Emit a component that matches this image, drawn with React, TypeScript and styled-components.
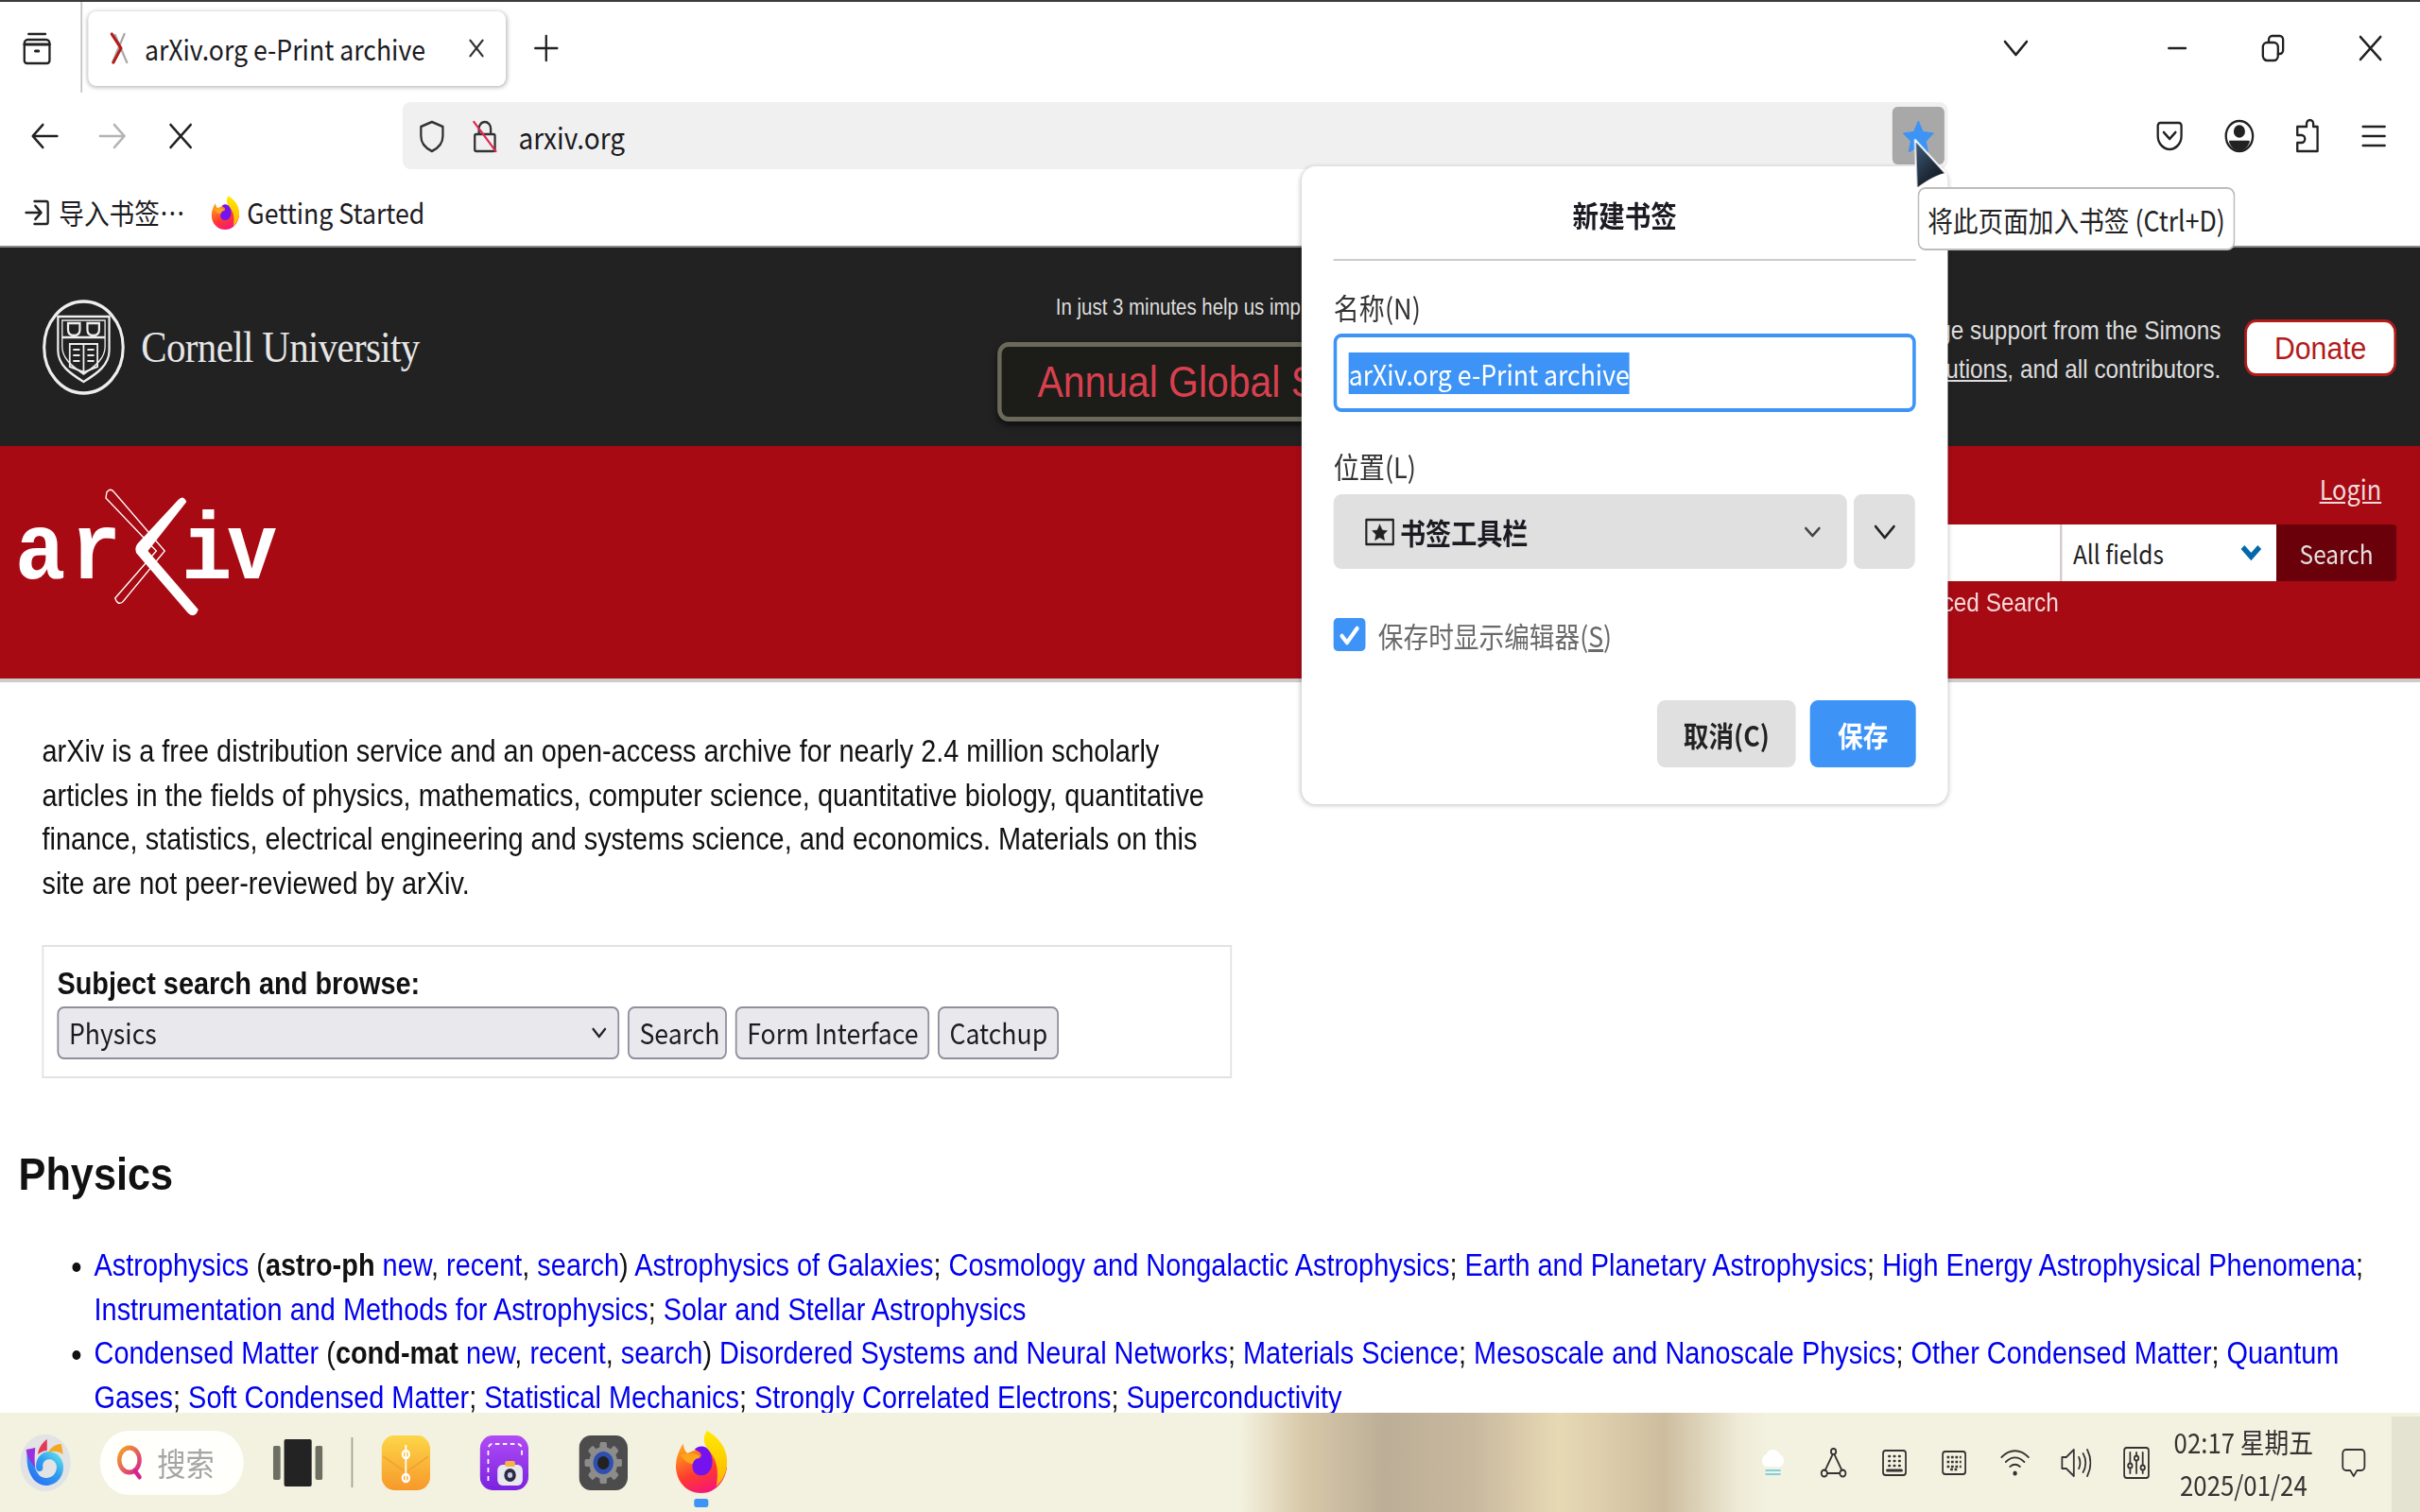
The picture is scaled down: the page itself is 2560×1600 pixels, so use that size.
import React from "react";
import styled, { createGlobalStyle } from "styled-components";

const UI_FONT = `"Noto Sans CJK SC", "Noto Sans", sans-serif`;
const WEB_FONT = `"Liberation Sans", Arial, sans-serif`;
const BLUE = "#3d94f6";

const GlobalStyle = createGlobalStyle`
  html, body {
    margin: 0;
    width: 2560px;
    height: 1600px;
    overflow: hidden;
    background: #fff;
  }
`;

/* the capture is squeezed horizontally, so the whole desktop is laid out wider and scaled back */
const Desktop = styled.div`
  position: relative;
  width: 2880px;
  height: 1600px;
  overflow: hidden;
  display: flex;
  flex-direction: column;
  transform: scaleX(0.8889);
  transform-origin: 0 0;
  font-family: ${UI_FONT};
  color: #1c1b22;
`;

const Ico = styled.svg.attrs<{ $w?: number; $h?: number; stroke?: string; strokeWidth?: string | number }>(p => ({
  fill: "none",
  stroke: p.stroke || "#222",
  strokeWidth: p.strokeWidth || 2.6,
  strokeLinecap: "round",
  strokeLinejoin: "round",
}))<{ $w?: number; $h?: number }>`
  width: ${p => p.$w || 32}px;
  height: ${p => p.$h || 32}px;
  flex-shrink: 0;
  display: block;
`;

const Slot = styled.div<{ $w?: number; $ml?: number }>`
  width: ${p => p.$w || 40}px;
  margin-left: ${p => p.$ml || 0}px;
  flex-shrink: 0;
  display: flex;
  align-items: center;
  justify-content: center;
`;

const TabRow = styled.div`
  height: 98px;
  border-top: 2px solid #3c3c3c;
  display: flex;
  align-items: center;
  padding: 0 39px 0 20px;
  background: #fff;
`;

const TabDivider = styled.div`
  width: 2px;
  height: 96px;
  margin-left: 28px;
  align-self: flex-start;
  background: #c4c4c4;
`;

const Tab = styled.div`
  width: 497px;
  height: 79px;
  margin-left: 7px;
  padding: 0 24px;
  box-sizing: border-box;
  display: flex;
  align-items: center;
  background: #fff;
  border-radius: 9px;
  box-shadow: 0 1px 6px rgba(0, 0, 0, 0.35);
`;

const TabTitle = styled.span`
  margin-left: 19px;
  font-size: 30px;
  white-space: nowrap;
  flex: 1;
`;

const WindowControls = styled.div`
  margin-left: auto;
  display: flex;
  align-items: center;
`;

const NavRow = styled.div`
  height: 82px;
  padding: 8px 0 0 33px;
  display: flex;
  align-items: flex-start;
  background: #fff;
`;

const NavButton = styled(Slot)`
  height: 71px;
`;

const UrlBar = styled.div`
  width: 1839px;
  height: 71px;
  margin-left: 244px;
  padding-left: 17px;
  box-sizing: border-box;
  display: flex;
  align-items: center;
  background: #f0f0f0;
  border-radius: 9px;
`;

const UrlText = styled.span`
  margin-left: 22px;
  font-size: 31.5px;
`;

const StarButton = styled.div`
  width: 62px;
  height: 61px;
  margin-left: auto;
  margin-right: 4px;
  display: flex;
  align-items: center;
  justify-content: center;
  background: #a8a8a8;
  border-radius: 6px;
`;

const BookmarksRow = styled.div`
  height: 70px;
  padding-left: 29px;
  display: flex;
  align-items: center;
  background: #fff;
  border-bottom: 2px solid #8a8a8a;
`;

const BookmarkLabel = styled.span<{ $ml: number }>`
  margin-left: ${p => p.$ml}px;
  margin-top: -2px;
  font-size: 30px;
  white-space: nowrap;
`;

const BookmarkGap = styled.span`
  width: 31px;
`;

const TopBanner = styled.div`
  height: 210px;
  padding-right: 28px;
  display: flex;
  align-items: flex-start;
  background: #222;
  font-family: ${WEB_FONT};
`;

const CornellBrand = styled.div`
  margin: 55px 0 0 49px;
  display: flex;
  align-items: center;
`;

const CornellName = styled.span`
  margin-left: 18px;
  font-family: "Liberation Serif", serif;
  font-size: 46px;
  letter-spacing: -0.7px;
  color: #e6e6e6;
  white-space: nowrap;
`;

const SurveyBlock = styled.div`
  width: 540px;
  margin: 43px 0 0 688px;
  display: flex;
  flex-direction: column;
  align-items: center;
`;

const SurveyNote = styled.div`
  height: 57px;
  font-size: 23px;
  line-height: 40px;
  color: #ddd;
  white-space: nowrap;
`;

const SurveyButton = styled.div`
  width: 100%;
  height: 84px;
  box-sizing: border-box;
  display: flex;
  align-items: center;
  justify-content: center;
  border: 5px solid #6b6a5a;
  border-radius: 13px;
  background: #1c1c18;
  box-shadow: 0 4px 8px rgba(0, 0, 0, 0.6);
  font-size: 46px;
  color: #d8404f;
  white-space: nowrap;
`;

const ThanksBlock = styled.div`
  margin: 67px 0 0 auto;
  font-size: 27.4px;
  line-height: 41px;
  color: #ddd;
  text-align: right;
  white-space: nowrap;
`;

const ThanksLink = styled.span`
  text-decoration: underline;
`;

const DonateButton = styled.div`
  width: 181px;
  height: 60px;
  margin: 76px 0 0 28px;
  box-sizing: border-box;
  display: flex;
  align-items: center;
  justify-content: center;
  background: #fff;
  border: 3px solid #b31b1b;
  border-radius: 14px;
  font-size: 34px;
  color: #b31b1b;
`;

const RedBanner = styled.div`
  height: 246px;
  padding-right: 28px;
  display: flex;
  justify-content: space-between;
  background: #a80a14;
  border-bottom: 4px solid #ccc;
`;

const ArxivMark = styled.svg`
  width: 335px;
  height: 140px;
  margin-top: 45px;
`;

const SearchColumn = styled.div`
  display: flex;
  flex-direction: column;
  align-items: flex-end;
`;

const LoginLink = styled.a`
  height: 56px;
  margin: 25px 18px 2px 0;
  font-size: 28.5px;
  line-height: 40px;
  color: #f0dcdc;
  text-decoration: underline;
`;

const SearchRow = styled.div`
  display: flex;
  height: 60px;
`;

const SearchInput = styled.div`
  width: 452px;
  background: #fff;
`;

const FieldSelect = styled.div`
  width: 257px;
  padding: 0 17px 0 13px;
  box-sizing: border-box;
  display: flex;
  align-items: center;
  justify-content: space-between;
  background: #fff;
  border-left: 2px solid #ccc;
  font-size: 27.5px;
  color: #222;
`;

const SearchSubmit = styled.div`
  width: 143px;
  display: flex;
  align-items: center;
  justify-content: center;
  background: #6a0009;
  border-radius: 0 4px 4px 0;
  font-size: 27.5px;
  color: #e4dede;
`;

const AdvancedLink = styled.a`
  margin: 5px 402px 0 0;
  font-family: ${WEB_FONT};
  font-size: 27.4px;
  line-height: 36px;
  color: #f4dada;
`;

const Content = styled.main`
  flex: 1;
  min-height: 0;
  background: #fff;
  font-family: ${WEB_FONT};
  font-size: 32.5px;
  line-height: 46.7px;
  color: #111;
`;

const Intro = styled.p`
  width: 1416px;
  margin: 50px 0 0 50px;
`;

const BrowseBox = styled.div`
  width: 1416px;
  height: 141px;
  margin: 41px 0 0 50px;
  padding: 16px 16px 0;
  box-sizing: border-box;
  border: 2px solid #e2e2e2;
`;

const BrowseTitle = styled.div`
  font-weight: bold;
  height: 47px;
`;

const BrowseRow = styled.div`
  display: flex;
  gap: 10px;
`;

const FormControl = styled.div<{ $w: number }>`
  width: ${p => p.$w}px;
  height: 56px;
  box-sizing: border-box;
  display: flex;
  align-items: center;
  justify-content: space-between;
  padding: 0 12px;
  background: #e9e9ed;
  border: 2px solid #8f8f9d;
  border-radius: 8px;
  font-family: ${UI_FONT};
  font-size: 30px;
  color: #1c1b22;
  white-space: nowrap;
`;

const SectionHeading = styled.h2`
  margin: 71px 0 0 22px;
  font-size: 48.7px;
  line-height: 60px;
  font-weight: bold;
`;

const TopicList = styled.ul`
  width: 2718px;
  margin: 44px 0 0 112px;
  padding: 0;
`;

const TopicLink = styled.a`
  color: #0000ee;
`;

const Taskbar = styled.footer`
  position: relative;
  height: 105px;
  flex-shrink: 0;
  display: flex;
  align-items: center;
  background: linear-gradient(
    90deg,
    #f3f1df 0,
    #f3f1df 1476px,
    #d8c9a9 1550px,
    #bcae97 1648px,
    #c8b89e 1752px,
    #e8d9b5 1855px,
    #cdbd9f 1981px,
    #eeead6 2068px,
    #f3f1df 2104px
  );
`;

const StartLogo = styled.svg`
  width: 62px;
  height: 62px;
  margin-left: 23px;
  flex-shrink: 0;
`;

const SearchPill = styled.div`
  width: 171px;
  height: 68px;
  margin-left: 34px;
  padding-left: 20px;
  box-sizing: border-box;
  display: flex;
  align-items: center;
  gap: 16px;
  background: #fffffb;
  border-radius: 34px;
  font-size: 34px;
  color: #a5a5a5;
`;

const TaskDivider = styled.div`
  width: 2px;
  height: 53px;
  margin-left: 34px;
  background: #a5a596;
`;

const AppIcon = styled.svg<{ $w?: number; $h?: number; $ml: number }>`
  width: ${p => p.$w || 58}px;
  height: ${p => p.$h || 58}px;
  margin-left: ${p => p.$ml}px;
  flex-shrink: 0;
`;

const RunningApp = styled.div`
  position: relative;
  margin-left: 55px;
  display: flex;
`;

const RunningDot = styled.span`
  position: absolute;
  left: 24px;
  bottom: -14px;
  width: 17px;
  height: 9px;
  border-radius: 3px;
  background: ${BLUE};
`;

const Tray = styled.div`
  margin-left: auto;
  align-self: stretch;
  display: flex;
  align-items: center;
`;

const Clock = styled.div`
  width: 166px;
  margin-left: 28px;
  text-align: center;
  font-size: 29px;
  line-height: 45px;
  color: #333;
  white-space: nowrap;
`;

const ShowDesktop = styled.div`
  width: 34px;
  height: 101px;
  margin-left: 30px;
  align-self: flex-end;
  background: #e4e2d0;
`;

const BookmarkPanel = styled.section`
  position: absolute;
  left: 1549px;
  top: 176px;
  width: 769px;
  height: 675px;
  padding: 0 38px;
  box-sizing: border-box;
  background: #fff;
  border-radius: 16px;
  box-shadow: 0 1px 6px rgba(0, 0, 0, 0.25);
`;

const PanelTitle = styled.h3`
  height: 100px;
  margin: 0;
  box-sizing: border-box;
  padding-top: 26px;
  border-bottom: 2px solid #ccc;
  text-align: center;
  font-size: 31px;
  line-height: 50px;
  font-weight: bold;
`;

const FieldLabel = styled.div<{ $mt: number }>`
  margin-top: ${p => p.$mt}px;
  height: 52px;
  font-size: 30.5px;
  line-height: 50px;
  color: #333;
`;

const NameInput = styled.div`
  height: 83px;
  margin-top: 1px;
  padding-left: 14px;
  box-sizing: border-box;
  display: flex;
  align-items: center;
  border: 4px solid ${BLUE};
  border-radius: 9px;
  font-size: 30px;
`;

const SelectedText = styled.span`
  height: 44px;
  line-height: 44px;
  background: ${BLUE};
  color: #fff;
  white-space: nowrap;
`;

const FolderRow = styled.div`
  display: flex;
  gap: 8px;
  margin-top: 3px;
`;

const FolderSelect = styled.div`
  width: 611px;
  height: 79px;
  padding: 0 30px 0 37px;
  box-sizing: border-box;
  display: flex;
  align-items: center;
  background: #e0e0e0;
  border-radius: 9px;
  font-size: 30.5px;
  font-weight: bold;
`;

const FolderName = styled.span`
  margin-left: 6px;
  flex: 1;
`;

const FolderExpand = styled.div`
  width: 73px;
  height: 79px;
  display: flex;
  align-items: center;
  justify-content: center;
  background: #e0e0e0;
  border-radius: 9px;
`;

const CheckRow = styled.div`
  height: 35px;
  margin-top: 52px;
  display: flex;
  align-items: center;
  font-size: 30px;
  color: #6a6a6a;
  white-space: nowrap;
`;

const CheckMark = styled.span`
  width: 38px;
  height: 35px;
  margin-right: 15px;
  display: flex;
  align-items: center;
  justify-content: center;
  background: ${BLUE};
  border-radius: 5px;
`;

const PanelActions = styled.div`
  margin-top: 52px;
  display: flex;
  justify-content: flex-end;
  gap: 17px;
`;

const PanelButton = styled.div<{ $primary?: boolean; $w: number }>`
  width: ${p => p.$w}px;
  height: 71px;
  display: flex;
  align-items: center;
  justify-content: center;
  border-radius: 9px;
  background: ${p => (p.$primary ? BLUE : "#e0e0e0")};
  color: ${p => (p.$primary ? "#fff" : "#222")};
  font-size: 30px;
  font-weight: bold;
`;

const Tooltip = styled.div`
  position: absolute;
  left: 2282px;
  top: 198px;
  width: 378px;
  height: 67px;
  box-sizing: border-box;
  display: flex;
  align-items: center;
  justify-content: center;
  background: #fff;
  border: 2px solid #bdbdbd;
  border-radius: 9px;
  font-size: 30px;
  color: #222;
  white-space: nowrap;
`;

const CursorArrow = styled.svg`
  position: absolute;
  left: 2272px;
  top: 144px;
  width: 48px;
  height: 60px;
`;

const FirefoxLogo = ({ w, h }: { w: number; h: number }) => (
  <svg viewBox="0 0 64 68" width={w} height={h} style={{ display: "block", flexShrink: 0 }}>
    <defs>
      <linearGradient id="ffBody" x1="0.2" y1="0.1" x2="0.6" y2="1">
        <stop offset="0" stopColor="#ff9a1c" />
        <stop offset="0.55" stopColor="#ff3a30" />
        <stop offset="1" stopColor="#f5157a" />
      </linearGradient>
      <linearGradient id="ffFlame" x1="0.5" y1="0" x2="0.5" y2="1">
        <stop offset="0" stopColor="#ffea00" />
        <stop offset="1" stopColor="#ffb300" />
      </linearGradient>
    </defs>
    <path d="M10 14C3 24 0 34 2 44C5 59 18 67 32 67C48 67 60 56 63 40C55 26 44 20 32 20C22 20 18 24 15 24C12 22 11 18 10 14Z" fill="url(#ffBody)" />
    <path d="M39 0C33 8 35 15 42 22C50 30 54 42 50 60C60 52 64 42 63 30C62 18 52 6 39 0Z" fill="url(#ffFlame)" />
    <path d="M7 26C14 24 22 23 30 27L26 35C18 37 11 33 7 26Z" fill="#ffa51c" />
    <path d="M24 20C30 15 38 16 42 22C46 28 47 36 43 42C39 48 31 50 25 46C20 42 20 34 26 30C32 30 34 26 30 23z" fill="#7412f0" />
  </svg>
);

const GearIcon = () => {
  const teeth = [0, 45, 90, 135, 180, 225, 270, 315];
  return (
    <AppIcon viewBox="0 0 58 58" $ml={60}>
      <rect width="58" height="58" rx="14" fill="#4c4c4c" />
      <g fill="#8c8c8c">
        {teeth.map(a => (
          <rect key={a} x="25" y="7" width="8" height="44" rx="2" transform={`rotate(${a} 29 29)`} />
        ))}
      </g>
      <circle cx="29" cy="29" r="17" fill="#8c8c8c" />
      <circle cx="29" cy="29" r="12" fill="#2f4fb0" />
      <circle cx="29" cy="29" r="7" fill="#222" />
    </AppIcon>
  );
};

const topics = [
  {
    name: "Astrophysics",
    tag: "astro-ph",
    subs: [
      "Astrophysics of Galaxies",
      "Cosmology and Nongalactic Astrophysics",
      "Earth and Planetary Astrophysics",
      "High Energy Astrophysical Phenomena",
      "Instrumentation and Methods for Astrophysics",
      "Solar and Stellar Astrophysics",
    ],
  },
  {
    name: "Condensed Matter",
    tag: "cond-mat",
    subs: [
      "Disordered Systems and Neural Networks",
      "Materials Science",
      "Mesoscale and Nanoscale Physics",
      "Other Condensed Matter",
      "Quantum", // wraps right here in the capture, kept as two runs with "Gases"
      "Gases",
      "Soft Condensed Matter",
      "Statistical Mechanics",
      "Strongly Correlated Electrons",
      "Superconductivity",
    ],
  },
];

export default function App() {
  return (
    <Desktop>
      <GlobalStyle />

      <TabRow>
        <Slot $w={48}>
          <Ico viewBox="0 0 36 36" $w={36} $h={36}>
            <path d="M8 3h20M3 13a4 4 0 0 1 4-4h22a4 4 0 0 1 4 4v18a3 3 0 0 1-3 3H6a3 3 0 0 1-3-3z" />
            <path d="M3 14h30M16 21h4" strokeWidth="3" />
          </Ico>
        </Slot>
        <TabDivider />
        <Tab>
          <Ico viewBox="0 0 24 36" $w={24} $h={36}>
            <path d="M19 3L5 33M8 4l14 29" stroke="#a9a9a9" />
            <path d="M4 3l11 15L6 33" stroke="#b31b1b" strokeWidth="3.4" />
          </Ico>
          <TabTitle>arXiv.org e-Print archive</TabTitle>
          <Ico viewBox="0 0 24 24" $w={22} $h={22} stroke="#333">
            <path d="M4 3l16 18M20 3L4 21" />
          </Ico>
        </Tab>
        <Slot $ml={28}>
          <Ico viewBox="0 0 32 32">
            <path d="M16 3v26M3 16h26" />
          </Ico>
        </Slot>
        <WindowControls>
          <Slot>
            <Ico viewBox="0 0 32 20" $h={20}>
              <path d="M3 3l13 14L29 3" />
            </Ico>
          </Slot>
          <Slot $ml={152}>
            <Ico viewBox="0 0 24 8" $w={24} $h={8}>
              <path d="M2 4h20" />
            </Ico>
          </Slot>
          <Slot $ml={74}>
            <Ico viewBox="0 0 28 30" $w={28} $h={30}>
              <rect x="2" y="9" width="18" height="19" rx="5" />
              <path d="M9 8V6a4 4 0 0 1 4-4h9a4 4 0 0 1 4 4v11a4 4 0 0 1-4 4h-2" />
            </Ico>
          </Slot>
          <Slot $ml={76}>
            <Ico viewBox="0 0 28 28" $w={28} $h={28}>
              <path d="M2 2l24 24M26 2L2 26" />
            </Ico>
          </Slot>
        </WindowControls>
      </TabRow>

      <NavRow>
        <NavButton>
          <Ico viewBox="0 0 34 30" $w={34} $h={30}>
            <path d="M32 15H3M15 3L3 15l12 12" />
          </Ico>
        </NavButton>
        <NavButton $ml={41}>
          <Ico viewBox="0 0 34 30" $w={34} $h={30} stroke="#b4b4b4">
            <path d="M2 15h29M19 3l12 12-12 12" />
          </Ico>
        </NavButton>
        <NavButton $ml={41}>
          <Ico viewBox="0 0 30 30" $w={30} $h={30}>
            <path d="M3 3l24 24M27 3L3 27" />
          </Ico>
        </NavButton>
        <UrlBar>
          <Slot $w={36}>
            <Ico viewBox="0 0 32 36" $w={32} $h={36} stroke="#333">
              <path d="M16 3l13 5v10c0 8-6 13-13 16C9 31 3 26 3 18V8z" />
            </Ico>
          </Slot>
          <Slot $w={36} $ml={27}>
            <Ico viewBox="0 0 32 38" $w={32} $h={38} stroke="#333">
              <path d="M6 17h20a2 2 0 0 1 2 2v14a2 2 0 0 1-2 2H6a2 2 0 0 1-2-2V19a2 2 0 0 1 2-2zM9 17v-6a7 7 0 0 1 14 0v6" />
              <path d="M3 4l26 31" stroke="#e22850" strokeWidth="2.4" />
            </Ico>
          </Slot>
          <UrlText>arxiv.org</UrlText>
          <StarButton>
            <svg viewBox="0 0 38 34" width="38" height="34">
              <path d="M19 1l5.400 11.400L37 14l-9 8.600L30.400 34 19 28 7.600 34 10 22.600 1 14l12.600-1.600z" fill={BLUE} stroke={BLUE} strokeLinejoin="round" />
            </svg>
          </StarButton>
        </UrlBar>
        <NavButton $ml={244}>
          <Ico viewBox="0 0 34 34" $w={34} $h={34}>
            <path d="M6 3h22a3 3 0 0 1 3 3v11c0 8-7 14-14 14S3 25 3 17V6a3 3 0 0 1 3-3z" />
            <path d="M10 13l7 7 7-7" />
          </Ico>
        </NavButton>
        <NavButton $ml={43}>
          <Ico viewBox="0 0 36 36" $w={36} $h={36}>
            <circle cx="18" cy="18" r="16" />
            <circle cx="18" cy="13" r="5.500" fill="#222" />
            <path d="M7 24h22c-2 5-6 8-11 8s-9-3-11-8z" fill="#222" />
          </Ico>
        </NavButton>
        <NavButton $ml={41}>
          <Ico viewBox="0 0 32 38" $w={32} $h={38}>
            <path d="M12 9h4V6a4 4 0 0 1 8 0v3h5v26H5v-9h5a4 4 0 0 0 0-8H5V9z" transform="translate(-1 0)" />
          </Ico>
        </NavButton>
        <NavButton $ml={39}>
          <Ico viewBox="0 0 32 28" $w={32} $h={28}>
            <path d="M3 4h26M3 14h26M3 24h26" />
          </Ico>
        </NavButton>
      </NavRow>

      <BookmarksRow>
        <Ico viewBox="0 0 30 34" $w={30} $h={34}>
          <path d="M12 5h14a2 2 0 0 1 2 2v20a2 2 0 0 1-2 2H12" />
          <path d="M2 17h17M13 10l7 7-7 7" />
        </Ico>
        <BookmarkLabel $ml={11}>导入书签…</BookmarkLabel>
        <BookmarkGap />
        <FirefoxLogo w={34} h={37} />
        <BookmarkLabel $ml={9}>Getting Started</BookmarkLabel>
      </BookmarksRow>

      <TopBanner>
        <CornellBrand>
          <svg viewBox="0 0 99 101" width="101" height="101" fill="none" stroke="#eee" strokeWidth="2.500">
            <ellipse cx="49.500" cy="50.500" rx="47" ry="48.500" strokeWidth="3.500" />
            <path d="M19 18h61v36c0 15-14 24-30.500 33C33 78 19 69 19 54z" />
            <path d="M24 22h51v28c0 12-11 20-25.500 29C35 70 24 62 24 50z" strokeWidth="1.500" />
            <path d="M24 40h51" />
            <path d="M31 25h14v7c0 4-3 6-7 6s-7-2-7-6zM54 25h14v7c0 4-3 6-7 6s-7-2-7-6z" />
            <path d="M33 47h33v24l-16 6-17-6zM49.500 46v32M37 53h8M37 59h8M37 65h8M54 53h8M54 59h8M54 65h8" strokeWidth="2" />
          </svg>
          <CornellName>Cornell University</CornellName>
        </CornellBrand>
        <SurveyBlock>
          <SurveyNote>In just 3 minutes help us improve arXiv:</SurveyNote>
          <SurveyButton>Annual Global Survey</SurveyButton>
        </SurveyBlock>
        <ThanksBlock>
          We gratefully acknowledge support from the Simons
          <br />
          Foundation, member <ThanksLink>institutions</ThanksLink>, and all contributors.
        </ThanksBlock>
        <DonateButton>Donate</DonateButton>
      </TopBanner>

      <RedBanner>
        <ArxivMark viewBox="0 0 335 140">
          <g fill="#fff" fontFamily="Liberation Mono, monospace" fontWeight="bold" fontSize="100">
            <text x="18" y="95" letterSpacing="6">ar</text>
            <text x="216" y="95" letterSpacing="-6">iv</text>
          </g>
          <path d="M127 4Q131-1 135 3L196 66 146 120Q140 124 137 116L186 66 126 10Z" fill="#a80a14" stroke="#fff" strokeWidth="1.500" />
          <path d="M212 12Q218 6 222 14L176 66 236 128Q232 138 224 132L162 68Q160 62 164 58Z" fill="#fff" />
        </ArxivMark>
        <SearchColumn>
          <LoginLink>Login</LoginLink>
          <SearchRow>
            <SearchInput />
            <FieldSelect>
              All fields
              <svg viewBox="0 0 26 18" width="26" height="18" fill="none" stroke="#0068ac" strokeWidth="6">
                <path d="M3 3l10 10L23 3" />
              </svg>
            </FieldSelect>
            <SearchSubmit>Search</SearchSubmit>
          </SearchRow>
          <AdvancedLink>Advanced Search</AdvancedLink>
        </SearchColumn>
      </RedBanner>

      <Content>
        <Intro>
          arXiv is a free distribution service and an open-access archive for nearly 2.4 million scholarly
          articles in the fields of physics, mathematics, computer science, quantitative biology, quantitative
          finance, statistics, electrical engineering and systems science, and economics. Materials on this
          site are not peer-reviewed by arXiv.
        </Intro>
        <BrowseBox>
          <BrowseTitle>Subject search and browse:</BrowseTitle>
          <BrowseRow>
            <FormControl $w={669}>
              Physics
              <Ico viewBox="0 0 20 12" $w={20} $h={12}>
                <path d="M3 2l7 8 7-8" />
              </Ico>
            </FormControl>
            <FormControl $w={118}>Search</FormControl>
            <FormControl $w={231}>Form Interface</FormControl>
            <FormControl $w={144}>Catchup</FormControl>
          </BrowseRow>
        </BrowseBox>
        <SectionHeading>Physics</SectionHeading>
        <TopicList>
          {topics.map(t => (
            <li key={t.tag}>
              <TopicLink>{t.name}</TopicLink> (<b>{t.tag}</b> <TopicLink>new</TopicLink>,{" "}
              <TopicLink>recent</TopicLink>, <TopicLink>search</TopicLink>){" "}
              {t.subs.map((s, i) => (
                <React.Fragment key={s}>
                  <TopicLink>{s}</TopicLink>
                  {i === t.subs.length - 1 ? "" : s === "Quantum" ? " " : "; "}
                </React.Fragment>
              ))}
            </li>
          ))}
        </TopicList>
      </Content>

      <Taskbar>
        <StartLogo viewBox="0 0 62 62">
          <defs>
            <linearGradient id="startRing" x1="0" y1="1" x2="1" y2="0">
              <stop offset="0" stopColor="#2a6cf5" />
              <stop offset="0.6" stopColor="#2f9df0" />
              <stop offset="1" stopColor="#5fe0ea" />
            </linearGradient>
          </defs>
          <circle cx="31" cy="31" r="30" fill="#e2e3e4" />
          <path d="M13 22C13 30 13 38 20 46C28 54 42 52 47 42C51 33 46 24 36 23C28 23 23 29 24 36" fill="none" stroke="url(#startRing)" strokeWidth="8" strokeLinecap="round" />
          <path d="M8 17L19 15C18 24 18 30 19 36C13 30 9 24 8 17Z" fill="#9a2fe0" />
          <path d="M22 22C23 15 27 10 33 6L33 18C29 18 25 20 22 22Z" fill="#e43a5a" />
          <path d="M34 20C38 14 44 11 50 11L52 22C46 18 40 18 34 20Z" fill="#f6a623" />
        </StartLogo>
        <SearchPill>
          <svg viewBox="0 0 32 38" width="32" height="38" fill="none" strokeWidth="5" strokeLinecap="round">
            <defs>
              <linearGradient id="searchRing" x1="0" y1="0" x2="1" y2="1">
                <stop offset="0" stopColor="#f5a623" />
                <stop offset="1" stopColor="#d6248f" />
              </linearGradient>
            </defs>
            <ellipse cx="15" cy="16" rx="12" ry="13" stroke="url(#searchRing)" />
            <path d="M22 28l5 6" stroke="#d6248f" />
          </svg>
          搜索
        </SearchPill>
        <AppIcon viewBox="0 0 54 50" $w={59} $h={50} $ml={35} preserveAspectRatio="none">
          <rect x="0" y="7" width="8" height="36" rx="2" fill="#6d6f62" />
          <rect x="12" y="0" width="30" height="50" rx="2" fill="#232323" />
          <rect x="46" y="7" width="8" height="36" rx="2" fill="#6d6f62" />
        </AppIcon>
        <TaskDivider />
        <AppIcon viewBox="0 0 58 58" $ml={34}>
          <defs>
            <linearGradient id="mailBg" x1="0" y1="0" x2="0" y2="1">
              <stop offset="0" stopColor="#fdd648" />
              <stop offset="1" stopColor="#f7982a" />
            </linearGradient>
          </defs>
          <rect width="58" height="58" rx="15" fill="url(#mailBg)" />
          <path d="M2 22l27 17 27-17" fill="none" stroke="#f2a52f" strokeWidth="2" />
          <path d="M29 10v38" stroke="#fff" strokeWidth="2" />
          <circle cx="29" cy="20" r="4" fill="none" stroke="#fff" strokeWidth="2.500" />
          <circle cx="29" cy="45" r="4" fill="none" stroke="#fff" strokeWidth="2.500" />
        </AppIcon>
        <AppIcon viewBox="0 0 58 58" $ml={59}>
          <defs>
            <linearGradient id="camBg" x1="0" y1="0" x2="0" y2="1">
              <stop offset="0" stopColor="#b14cf5" />
              <stop offset="1" stopColor="#7a22e0" />
            </linearGradient>
          </defs>
          <rect width="58" height="58" rx="15" fill="url(#camBg)" />
          <path d="M10 48V14a5 5 0 0 1 5-5h30a5 5 0 0 1 5 5v10" fill="none" stroke="#fff" strokeWidth="2" strokeDasharray="5 4" />
          <rect x="21" y="31" width="30" height="22" rx="6" fill="#e8e8ee" />
          <rect x="30" y="27" width="12" height="6" rx="2" fill="#f5b342" />
          <circle cx="36" cy="42" r="7" fill="#2b2b44" />
          <circle cx="36" cy="42" r="3" fill="#c9c9e6" />
        </AppIcon>
        <GearIcon />
        <RunningApp>
          <FirefoxLogo w={65} h={67} />
          <RunningDot />
        </RunningApp>

        <Tray>
          <svg viewBox="0 0 34 30" width="34" height="30">
            <path d="M8 19a7 7 0 0 1 1-13 9 9 0 0 1 16 0 7 7 0 0 1 1 13z" fill="#fff" />
            <path d="M8 22h18v2H8zM8 26h18v2H8z" fill="#7fd0e0" />
          </svg>
          <Slot $w={32} $ml={39}>
            <Ico viewBox="0 0 32 34" $h={34} stroke="#333" strokeWidth="2">
              <circle cx="16" cy="5" r="3" />
              <circle cx="5" cy="28" r="3.500" />
              <circle cx="27" cy="28" r="3.500" />
              <path d="M15 8L6 25M17 8l9 17M9 28h14" />
            </Ico>
          </Slot>
          <Slot $w={31} $ml={41}>
            <Ico viewBox="0 0 31 30" $w={31} $h={30} stroke="#333" strokeWidth="2">
              <rect x="2" y="2" width="27" height="26" rx="3" />
              <path d="M9 8h1M15 8h1M21 8h1M9 13h1M15 13h1M21 13h1M9 18h1M15 18h1M21 18h1" strokeWidth="2.500" />
              <path d="M7 23h17" strokeWidth="3" />
            </Ico>
          </Slot>
          <Slot $w={31} $ml={40}>
            <Ico viewBox="0 0 31 28" $w={31} $h={28} stroke="#333" strokeWidth="2">
              <rect x="2" y="2" width="27" height="24" rx="3" />
              <path d="M7 8h17M7 13h17M7 18h17M11 21h9" strokeDasharray="3 2" strokeWidth="2.500" strokeLinecap="butt" />
            </Ico>
          </Slot>
          <Slot $w={36} $ml={39}>
            <Ico viewBox="0 0 36 30" $w={36} $h={30} stroke="#333" strokeWidth="2">
              <path d="M2 9c10-9 22-9 32 0M7 14c7-6 15-6 22 0M12 19c4-3 8-3 12 0" />
              <circle cx="18" cy="26" r="1.500" fill="#333" />
            </Ico>
          </Slot>
          <Slot $w={37} $ml={36}>
            <Ico viewBox="0 0 37 34" $w={37} $h={34} stroke="#333" strokeWidth="2">
              <path d="M2 11h5l9-8v28l-9-8H2z" />
              <path d="M22 11c2 4 2 8 0 12M27 7c4 6 4 14 0 20M32 3c5 9 5 19 0 28" />
            </Ico>
          </Slot>
          <Slot $w={33} $ml={37}>
            <Ico viewBox="0 0 33 36" $w={33} $h={36} stroke="#333" strokeWidth="2">
              <rect x="2" y="2" width="29" height="32" rx="3" />
              <path d="M9 7v22M16.500 7v22M24 7v22" />
              <circle cx="9" cy="21" r="2.500" fill="#f3f2df" />
              <circle cx="16.500" cy="13" r="2.500" fill="#f3f2df" />
              <circle cx="24" cy="23" r="2.500" fill="#f3f2df" />
            </Ico>
          </Slot>
          <Clock>
            02:17 星期五
            <br />
            2025/01/24
          </Clock>
          <Slot $w={30} $ml={33}>
            <Ico viewBox="0 0 30 32" $w={30} $h={32} stroke="#333" strokeWidth="2">
              <path d="M6 2h18a4 4 0 0 1 4 4v14a4 4 0 0 1-4 4h-5l-4 6-4-6H6a4 4 0 0 1-4-4V6a4 4 0 0 1 4-4z" />
            </Ico>
          </Slot>
          <ShowDesktop />
        </Tray>
      </Taskbar>

      <BookmarkPanel>
        <PanelTitle>新建书签</PanelTitle>
        <FieldLabel $mt={24}>名称(N)</FieldLabel>
        <NameInput>
          <SelectedText>arXiv.org e-Print archive</SelectedText>
        </NameInput>
        <FieldLabel $mt={32}>位置(L)</FieldLabel>
        <FolderRow>
          <FolderSelect>
            <Ico viewBox="0 0 36 30" $w={36} $h={30} stroke="#222" strokeWidth="2.400">
              <rect x="2" y="2" width="32" height="26" />
              <path d="M18 7l3 6 6 .6-4.500 4.200 1.200 6-5.700-3-5.700 3 1.200-6L9 13.600l6-.6z" fill="#222" strokeWidth="0.500" />
            </Ico>
            <FolderName>书签工具栏</FolderName>
            <Ico viewBox="0 0 22 14" $w={22} $h={14} stroke="#444">
              <path d="M3 3l8 8 8-8" />
            </Ico>
          </FolderSelect>
          <FolderExpand>
            <Ico viewBox="0 0 28 18" $w={28} $h={18}>
              <path d="M3 3l11 12L25 3" />
            </Ico>
          </FolderExpand>
        </FolderRow>
        <CheckRow>
          <CheckMark>
            <svg viewBox="0 0 26 22" width="26" height="22" fill="none" stroke="#fff" strokeWidth="4.500" strokeLinecap="round" strokeLinejoin="round">
              <path d="M4 12l6 7L22 4" />
            </svg>
          </CheckMark>
          保存时显示编辑器(<u>S</u>)
        </CheckRow>
        <PanelActions>
          <PanelButton $w={165}>取消(C)</PanelButton>
          <PanelButton $w={126} $primary>保存</PanelButton>
        </PanelActions>
      </BookmarkPanel>

      <Tooltip>将此页面加入书签 (Ctrl+D)</Tooltip>

      <CursorArrow viewBox="0 0 48 60">
        <defs>
          <linearGradient id="cursorFill" x1="0" y1="0" x2="0.6" y2="1">
            <stop offset="0" stopColor="#3f5f7e" />
            <stop offset="1" stopColor="#11141c" />
          </linearGradient>
        </defs>
        <path d="M7 4L44 40C34 41 24 46 9 56z" fill="url(#cursorFill)" stroke="#fff" strokeWidth="2" strokeLinejoin="round" />
      </CursorArrow>
    </Desktop>
  );
}
